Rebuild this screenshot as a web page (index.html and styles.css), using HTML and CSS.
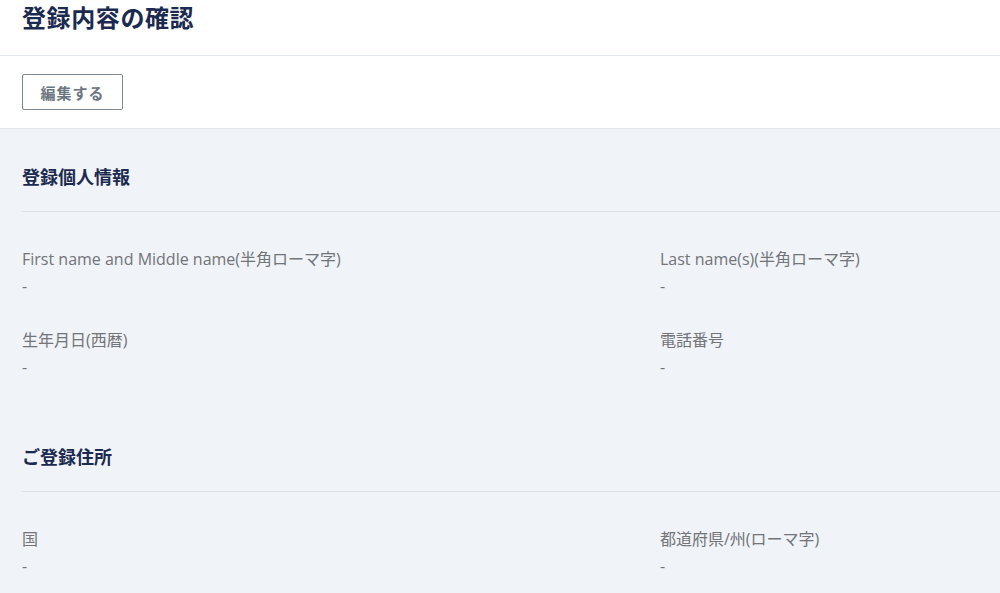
FILE: index.html
```html
<!DOCTYPE html>
<html lang="ja">

<head>
    <meta charset="UTF-8">
    <meta name="viewport" content="width=device-width, initial-scale=1.0">
    <title>登録内容の確認</title>
    <link rel="stylesheet" href="styles.css">
</head>

<body>
    <header class="page-header">
        <h1>登録内容の確認</h1>
    </header>

    <div class="toolbar">
        <button type="button" class="edit-btn">編集する</button>
    </div>

    <main class="content">
        <section class="info-section">
            <h2>登録個人情報</h2>
            <div class="field-grid">
                <div class="field">
                    <p class="field-label">First name and Middle name(半角ローマ字)</p>
                    <p class="field-value">-</p>
                </div>
                <div class="field">
                    <p class="field-label">Last name(s)(半角ローマ字)</p>
                    <p class="field-value">-</p>
                </div>
                <div class="field">
                    <p class="field-label">生年月日(西暦)</p>
                    <p class="field-value">-</p>
                </div>
                <div class="field">
                    <p class="field-label">電話番号</p>
                    <p class="field-value">-</p>
                </div>
            </div>
        </section>

        <section class="info-section">
            <h2>ご登録住所</h2>
            <div class="field-grid">
                <div class="field">
                    <p class="field-label">国</p>
                    <p class="field-value">-</p>
                </div>
                <div class="field">
                    <p class="field-label">都道府県/州(ローマ字)</p>
                    <p class="field-value">-</p>
                </div>
            </div>
        </section>
    </main>
</body>

</html>
```

FILE: styles.css
```css
/* Reset */
* {
    margin: 0;
    padding: 0;
    box-sizing: border-box;
}

body {
    font-family: 'Open Sans', 'Noto Sans CJK JP', sans-serif;
    background: #f0f3f7;
    color: #1b2a4e;
    overflow: hidden;
}

/* Header */
.page-header {
    background: #fff;
    height: 56px;
    padding: 2px 22px 0;
    border-bottom: 1px solid #e3e6ea;
}

.page-header h1 {
    font-family: 'Noto Sans CJK JP', sans-serif;
    font-size: 24px;
    line-height: 30px;
    letter-spacing: 0.6px;
    font-weight: bold;
    color: #1b2a4e;
}

/* Toolbar */
.toolbar {
    background: #fff;
    height: 73px;
    padding: 18px 22px 0;
    border-bottom: 1px solid #e3e6ea;
}

.edit-btn {
    width: 101px;
    height: 36px;
    background: #fff;
    border: 1px solid #7d8894;
    border-radius: 2px;
    color: #6b7580;
    font-family: inherit;
    font-size: 15px;
    letter-spacing: 1px;
    font-weight: bold;
    cursor: pointer;
}

/* Sections */
.content {
    padding-left: 22px;
}

.info-section {
    padding-top: 36px;
}

.info-section + .info-section {
    padding-top: 66px;
}

.info-section h2 {
    font-size: 18px;
    line-height: 24px;
    font-weight: bold;
    color: #1b2a4e;
    padding-bottom: 22px;
    border-bottom: 1px solid #dde1e6;
}

.field-grid {
    display: grid;
    grid-template-columns: 638px 1fr;
    row-gap: 30px;
    padding-top: 35px;
}

.field-label {
    font-size: 16px;
    line-height: 24px;
    color: #727477;
}

.field-value {
    font-size: 16px;
    line-height: 24px;
    color: #727477;
    margin-top: 3px;
}
```
